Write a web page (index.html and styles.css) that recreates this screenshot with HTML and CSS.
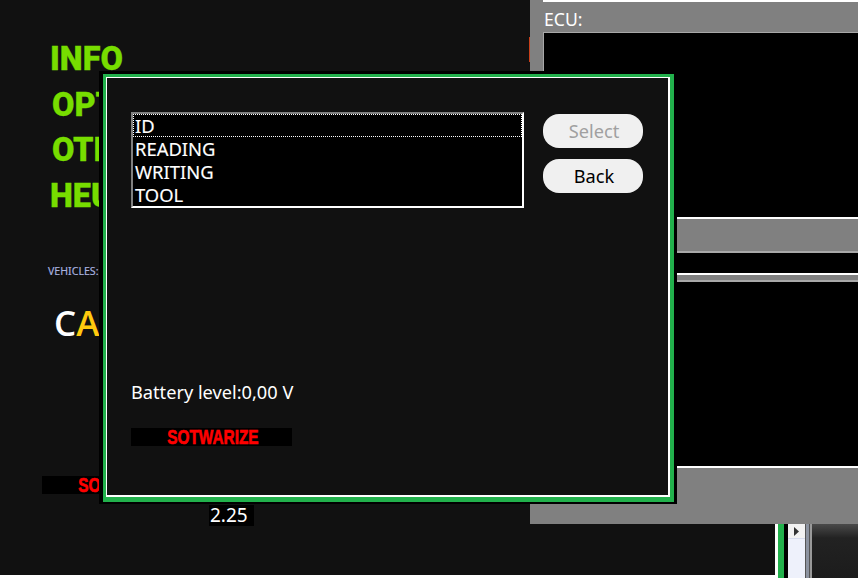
FILE: index.html
```html
<!DOCTYPE html>
<html lang="en">
<head>
<meta charset="utf-8">
<title>Sotwarize</title>
<link rel="stylesheet" href="styles.css">
</head>
<body>
<div class="desktop">
  <main class="home">
    <nav class="menu">
      <div class="menu-item">INFO</div>
      <div class="menu-item menu-item-in">OPTIONS</div>
      <div class="menu-item menu-item-in">OTHER</div>
      <div class="menu-item">HEUR</div>
    </nav>
    <div class="vehicles">VEHICLES:</div>
    <div class="car"><span class="car-c">C</span><span class="car-a">A</span></div>
    <div class="brand-row"><div class="brand brand-home"><span class="brand-text">SOTWARIZE</span></div></div>
    <div class="version"><span>2.25</span></div>
  </main>

  <div class="sliver"></div>

  <section class="ecu-window">
    <div class="ecu-title">ECU:</div>
    <div class="pane pane-first"></div>
    <div class="bar bar-tall"></div>
    <div class="pane pane-gap"></div>
    <div class="bar bar-thin"></div>
    <div class="pane pane-last"></div>
    <div class="footer-bar"></div>
  </section>

  <aside class="strip">
    <div class="strip-green"></div>
    <div class="strip-scroll">
      <div class="scroll-btn"><svg class="scroll-arrow" viewBox="0 0 5 9"><path d="M0 0 L5 4.5 L0 9 Z"/></svg></div>
    </div>
    <div class="strip-rule"></div>
    <div class="strip-photo"></div>
  </aside>

  <section class="dialog">
    <div class="dialog-green">
      <div class="dialog-white">
        <div class="dialog-body">
          <div class="top-row">
            <ul class="list">
              <li class="list-item list-item-focus">ID</li>
              <li class="list-item">READING</li>
              <li class="list-item">WRITING</li>
              <li class="list-item">TOOL</li>
            </ul>
            <div class="buttons">
              <button class="btn btn-disabled" type="button">Select</button>
              <button class="btn" type="button">Back</button>
            </div>
          </div>
          <div class="battery">Battery level:0,00 V</div>
          <div class="brand brand-dialog"><span class="brand-text">SOTWARIZE</span></div>
        </div>
      </div>
    </div>
  </section>
</div>
</body>
</html>
```
FILE: styles.css
```css
* { box-sizing: border-box; }
html, body { margin: 0; padding: 0; }
body { width: 858px; height: 578px; overflow: hidden; background: #fff; font-family: "Noto Sans", "Open Sans", sans-serif; }

.desktop { position: relative; width: 858px; height: 578px; overflow: hidden; background: #fff; }

.home { width: 775px; height: 575px; background: #111; padding: 41px 0 0 50px; display: flex; flex-direction: column; align-items: flex-start; }
.menu { display: flex; flex-direction: column; }
.menu-item { height: 45.7px; font-family: Roboto, sans-serif; font-weight: 900; font-size: 32.5px; line-height: 37px; color: #77dd00; -webkit-text-stroke: 0.3px #77dd00; white-space: nowrap; }
.menu-item-in { margin-left: 2px; }

.vehicles { margin: 40px 0 0 -2px; font-size: 10.6px; line-height: 14px; color: #aab4e0; -webkit-text-stroke: 0.15px #aab4e0; }
.car { margin: 23px 0 0 4px; font-family: "Open Sans", sans-serif; font-weight: 600; font-size: 35px; line-height: 44px; }
.car-c { color: #fff; }
.car-a { color: #ffc90e; }

.brand { height: 18px; background: #000; color: #f00; display: flex; justify-content: center; align-items: center; }
.brand-text { display: inline-block; font-family: "Liberation Sans", sans-serif; font-weight: 700; font-size: 21px; line-height: 18px; transform: translateX(1.5px) scaleX(0.73); -webkit-text-stroke: 0.7px #f00; }
.brand-row { margin: 131px 0 0 -8px; }
.brand-home { width: 161px; }
.version { margin: 11px 0 0 159px; width: 45px; height: 21px; background: #000; color: #fff; font-size: 19px; line-height: 20px; padding-left: 1px; }

.sliver { position: absolute; left: 529px; top: 37px; width: 1px; height: 25px; background: #c8401a; }

.ecu-window { position: absolute; left: 530px; top: 0; width: 328px; height: 524px; background: #808080; padding-left: 13px; display: flex; flex-direction: column; }
.ecu-title { height: 33px; border-top: 2px solid #fff; border-bottom: 1px solid #a8a8a8; color: #fff; font-size: 17.6px; line-height: 35px; padding-left: 1px; }
.pane { background: #000; margin-left: 1px; }
.pane-first { height: 184px; box-shadow: -1px 0 0 #a8a8a8; }
.bar { background: #808080; margin-left: 1px; border-top: 2px solid #fff; border-bottom: 2px solid #a8a8a8; }
.bar-tall { height: 36px; }
.pane-gap { height: 20px; }
.bar-thin { height: 9px; }
.pane-last { height: 184px; }
.footer-bar { flex: 1; margin-left: 1px; border-top: 2px solid #fff; }

.strip { position: absolute; left: 775px; top: 524px; width: 83px; height: 54px; display: flex; background: #111; }
.strip-green { width: 13px; background: #22b14c; border-left: 3px solid #fff; border-right: 4px solid #000; }
.strip-scroll { width: 17px; background: #eef1fb; }
.scroll-btn { height: 15px; background: #f2f2f2; border-bottom: 1px solid #d8ddee; display: flex; align-items: center; justify-content: center; }
.scroll-arrow { width: 5px; height: 9px; fill: #333; }
.strip-rule { width: 7px; background: linear-gradient(90deg, #555 0 1px, #8c93a0 1px 4px, #555 4px 5px, #999 5px 7px); }
.strip-photo { flex: 1; background: linear-gradient(180deg, #4a4a4a 0, #222 14px, #1c1c1c 100%); }

.dialog { position: absolute; left: 99px; top: 71px; width: 578px; height: 433px; background: #000; padding: 3px 3px 2px 4px; display: flex; }
.dialog-green { flex: 1; background: #22b14c; padding: 3px 4px 5px 3px; display: flex; }
.dialog-white { flex: 1; background: #fff; padding: 1px 2px 2px 1px; display: flex; }
.dialog-body { flex: 1; background: #111; padding: 34px 25px 0 24px; display: flex; flex-direction: column; align-items: flex-start; }

.top-row { display: flex; gap: 19px; align-items: flex-start; }
.list { margin: 0; padding: 0; list-style: none; width: 393px; height: 96px; background: #000; border: 2px solid; border-color: #808080 #fff #fff #808080; color: #fff; font-size: 18.4px; }
.list-item { height: 23px; line-height: 23px; padding-left: 2px; -webkit-text-stroke: 0.15px #fff; }
.list-item-focus { outline: 1px dotted #fff; outline-offset: -1px; }

.buttons { display: flex; flex-direction: column; gap: 11px; padding-top: 2px; }
.btn { width: 100px; height: 34px; border: 0; border-radius: 16px; background: #f0f0f0; color: #000; font-family: inherit; font-size: 18.2px; line-height: 34px; padding: 0 0 0 2px; }
.btn-disabled { color: #a0a0a0; }

.battery { margin-top: 172px; color: #fff; font-size: 18.2px; line-height: 24px; }
.brand-dialog { margin-top: 24px; width: 161px; }
```
